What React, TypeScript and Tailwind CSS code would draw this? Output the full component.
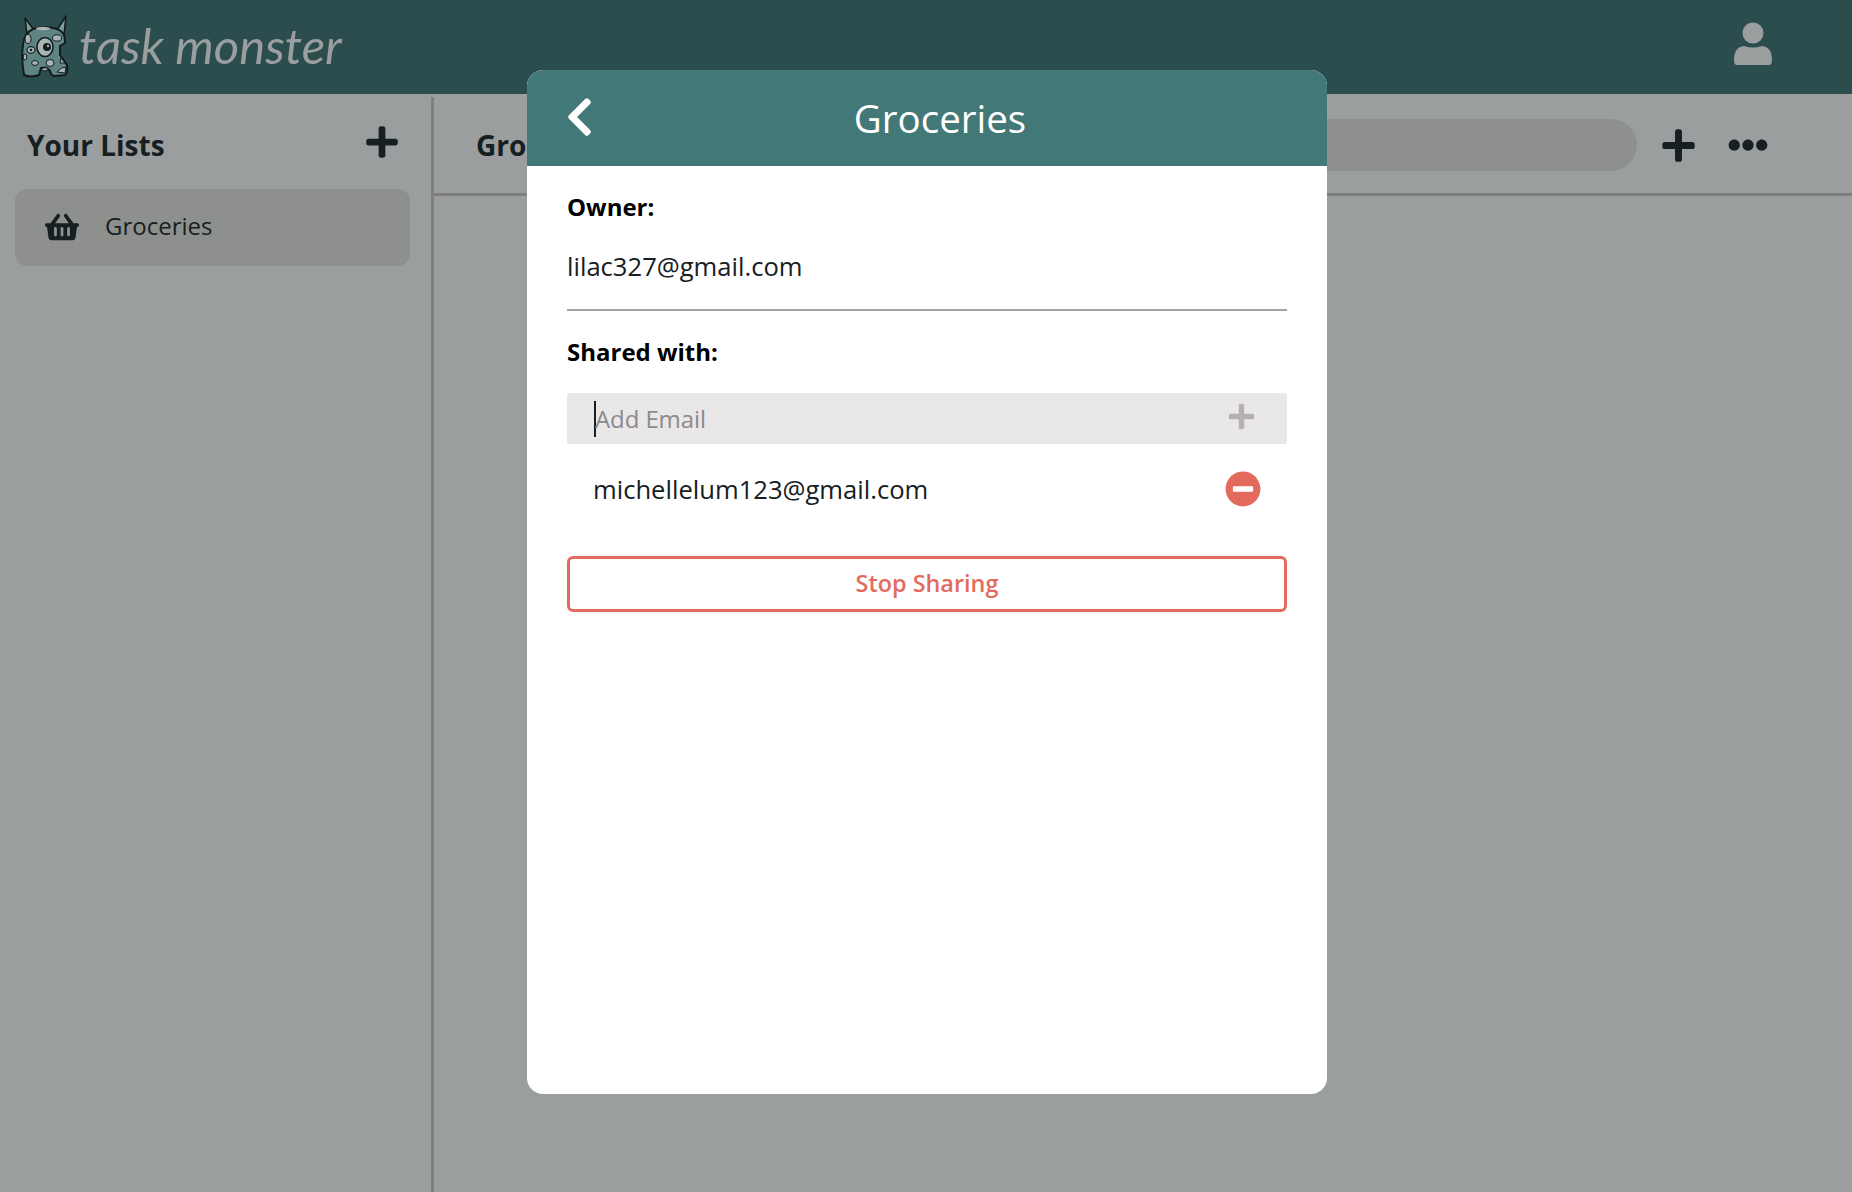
import { FaChevronLeft, FaEllipsisH, FaMinusCircle, FaPlus, FaShoppingBasket } from 'react-icons/fa'

function MonsterLogo() {
  return (
    <svg viewBox="0 0 50 66" className="h-[66px] w-[50px]">
      <path d="M8 22 L6 5 L15 17 M38 17 L47 3 L45 22" fill="#7f9c9b" stroke="#121c1d" strokeWidth="1.6" strokeLinejoin="round" />
      <path d="M14 16 Q26 12 38 16 Q47 19 46 30 L41 33 L41 42 L48 52 Q49 60 46 62 L36 63 Q32 63 31 58 Q28 53 22 55 L20 62 Q12 65 5 62 Q2 45 4 32 Q5 20 14 16 Z" fill="#5f8484" stroke="#121c1d" strokeWidth="2" strokeLinejoin="round" />
      <ellipse cx="26" cy="34" rx="8" ry="9.5" fill="#a9b4b3" stroke="#121c1d" strokeWidth="1.6" />
      <circle cx="28" cy="34" r="4" fill="#121c1d" />
      <circle cx="29" cy="33" r="1.2" fill="#a9b4b3" />
      <ellipse cx="12" cy="37" rx="4" ry="3.4" fill="#a9b4b3" stroke="#121c1d" strokeWidth="1.2" />
      <circle cx="12" cy="37" r="1.3" fill="#121c1d" />
      <ellipse cx="9" cy="26" rx="3" ry="4.5" fill="#a9b4b3" stroke="#121c1d" />
      <ellipse cx="38" cy="25" rx="4.5" ry="3.2" fill="#a9b4b3" stroke="#121c1d" />
      <ellipse cx="24" cy="15.500" rx="7" ry="1.8" fill="#a9b4b3" />
      <ellipse cx="31" cy="50" rx="4" ry="3.5" fill="#a9b4b3" stroke="#121c1d" />
      <ellipse cx="16" cy="50" rx="3.400" ry="2.4" fill="#a9b4b3" stroke="#121c1d" />
      <ellipse cx="6" cy="44" rx="1.800" ry="3" fill="#a9b4b3" stroke="#121c1d" />
      <path d="M22 57 Q25 53 30 56 L26 58 Z" fill="#a9b4b3" stroke="#121c1d" />
      <path d="M38 59 Q42 54 47 54 L46 60 Z" fill="#a9b4b3" stroke="#121c1d" />
      <path d="M42 45 L46 50 L41 50 Z" fill="#a9b4b3" stroke="#121c1d" />
    </svg>
  )
}

function UserIcon() {
  return (
    <svg viewBox="0 0 38 44" className="h-[44px] w-[38px]" fill="#9a9e9e">
      <circle cx="19" cy="11" r="10.500" />
      <path d="M0 38 Q0 25 10 24 Q19 27 28 24 Q38 25 38 38 Q38 43 35 43 L3 43 Q0 43 0 38 Z" />
    </svg>
  )
}

export default function App() {
  return (
    <div className="relative flex h-[1192px] w-full flex-col overflow-hidden bg-[#9a9e9e] font-['Open_Sans',sans-serif] text-[#162022]">
      {/* Top bar */}
      <header className="flex h-[94px] shrink-0 items-center justify-between bg-[#2c4d4d] pl-[19px] pr-[80px]">
        <div className="flex items-center gap-[10px]">
          <div className="-mt-[2px]">
            <MonsterLogo />
          </div>
          <span className="-mt-[4px] font-['Lato',sans-serif] text-[49px] leading-none font-normal text-[#9a9e9e] italic">
            task monster
          </span>
        </div>
        <div className="-mt-[6px]">
          <UserIcon />
        </div>
      </header>

      <div className="flex min-h-0 flex-1">
        {/* Sidebar */}
        <aside className="mt-[3px] w-[434px] shrink-0 border-r-[3px] border-[#7f7f82] pr-[21px] pl-[15px]">
          <div className="flex h-[92px] items-center justify-between pt-[4px] pr-[10px] pl-[12px]">
            <h2 className="text-[28px] font-bold">Your Lists</h2>
            <FaPlus className="-mt-[7px] h-[36px] w-[36px]" />
          </div>
          <div className="flex h-[77px] items-center gap-[26px] rounded-xl bg-[#8e908e] pl-[30px]">
            <FaShoppingBasket className="-mt-[2px] h-[30px] w-[34px]" />
            <span className="-mt-[4px] text-[24px]">Groceries</span>
          </div>
        </aside>

        {/* Main list area */}
        <main className="min-w-0 flex-1">
          <div className="flex h-[102px] items-center border-b-[3px] border-[#7f7f82] pt-[3px] pr-[84px] pl-[42px]">
            <h2 className="text-[28px] font-bold">Groceries</h2>
            <div className="ml-auto h-[52px] w-[600px] rounded-full bg-[#8e908e]" />
            <FaPlus className="ml-[23px] h-[37px] w-[37px]" />
            <FaEllipsisH className="ml-[31px] h-[40px] w-[40px]" />
          </div>
        </main>
      </div>

      {/* Share modal */}
      <div className="absolute top-[70px] left-[527px] flex h-[1024px] w-[800px] flex-col overflow-hidden rounded-2xl bg-white">
        <div className="relative flex h-[96px] shrink-0 items-center justify-center bg-[#437878] text-white">
          <FaChevronLeft className="absolute top-[25px] left-[37px] h-[44px] w-[31px]" />
          <h1 className="ml-[26px] text-[38.500px] leading-none">Groceries</h1>
        </div>
        <div className="flex flex-col px-[40px]">
          <h3 className="mt-[23px] text-[24px] leading-[36px] font-bold text-black">Owner:</h3>
          <p className="mt-[24px] border-b-2 border-[#a3a3a3] pb-[24px] text-[25.600px] leading-[36px]">lilac327@gmail.com</p>
          <h3 className="mt-[23px] text-[24px] leading-[36px] font-bold text-black">Shared with:</h3>
          <div className="mt-[23px] flex h-[51px] items-center rounded-[3px] bg-[#e9e7e8] pr-[31px] pl-[27px]">
            <span className="h-[36px] w-[2px] bg-[#162022]" />
            <span className="-ml-[1px] text-[24px] tracking-[-0.1px] text-[#8c8a8c]">Add Email</span>
            <FaPlus className="-mt-[4px] ml-auto h-[29px] w-[29px] text-[#b5b1b3]" />
          </div>
          <div className="mt-[16px] flex h-[60px] items-center pr-[26px] pl-[26px]">
            <span className="text-[25.600px]">michellelum123@gmail.com</span>
            <FaMinusCircle className="-mt-[3px] ml-auto h-[36px] w-[36px] text-[#e36b5d]" />
          </div>
          <button className="mt-[36px] h-[56px] rounded-md border-[3px] border-[#e36b5d] text-[23.400px] font-semibold text-[#e36b5d]">
            Stop Sharing
          </button>
        </div>
      </div>
    </div>
  )
}
